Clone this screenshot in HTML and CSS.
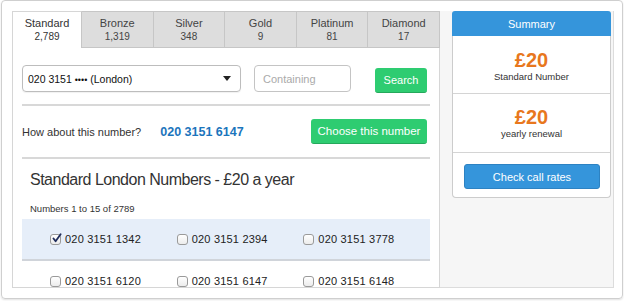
FILE: index.html
```html
<!DOCTYPE html>
<html>
<head>
<meta charset="utf-8">
<link rel="stylesheet" href="styles.css">
</head>
<body>
<div class="frame">
  <div class="main">
    <div class="tabs">
      <div class="tab active"><span class="tab-name">Standard</span><span class="tab-count">2,789</span></div>
      <div class="tab"><span class="tab-name">Bronze</span><span class="tab-count">1,319</span></div>
      <div class="tab"><span class="tab-name">Silver</span><span class="tab-count">348</span></div>
      <div class="tab"><span class="tab-name">Gold</span><span class="tab-count">9</span></div>
      <div class="tab"><span class="tab-name">Platinum</span><span class="tab-count">81</span></div>
      <div class="tab"><span class="tab-name">Diamond</span><span class="tab-count">17</span></div>
    </div>
    <div class="panel">
      <div class="search-row">
        <div class="select"><span>020 3151 <span class="dots">••••</span> (London)</span><svg class="caret" width="8" height="5" viewBox="0 0 8 5"><path d="M0 0H8L4 5Z" fill="#222"/></svg></div>
        <div class="input">Containing</div>
        <div class="btn btn-green btn-search">Search</div>
      </div>
      <div class="rule"></div>
      <div class="suggest-row">
        <span class="suggest-label">How about this number?</span>
        <span class="suggest-number">020 3151 6147</span>
        <div class="btn btn-green btn-choose">Choose this number</div>
      </div>
      <div class="rule"></div>
      <h2 class="heading">Standard London Numbers - £20 a year</h2>
      <div class="count">Numbers 1 to 15 of 2789</div>
      <div class="num-row selected">
        <div class="num"><span class="cb checked"><svg width="11" height="11" viewBox="0 0 11 11"><path d="M2.5 5.5L4.6 8.3L9.6 1.2" fill="none" stroke="#1f2d5c" stroke-width="1.8" stroke-linecap="round" stroke-linejoin="round"/></svg></span>020 3151 1342</div>
        <div class="num"><span class="cb"></span>020 3151 2394</div>
        <div class="num"><span class="cb"></span>020 3151 3778</div>
      </div>
      <div class="num-row">
        <div class="num"><span class="cb"></span>020 3151 6120</div>
        <div class="num"><span class="cb"></span>020 3151 6147</div>
        <div class="num"><span class="cb"></span>020 3151 6148</div>
      </div>
    </div>
  </div>
  <div class="side">
    <div class="card">
      <div class="card-head">Summary</div>
      <div class="card-body">
        <div class="price-block first">
          <div class="price">£20</div>
          <div class="price-label">Standard Number</div>
        </div>
        <div class="price-block">
          <div class="price">£20</div>
          <div class="price-label">yearly renewal</div>
        </div>
        <div class="rates">
          <div class="btn btn-blue">Check call rates</div>
        </div>
      </div>
    </div>
  </div>
</div>
</body>
</html>
```

FILE: styles.css
```css
* { box-sizing: border-box; }
html, body { margin: 0; padding: 0; background: #fff; }
body {
  font-family: "Liberation Sans", Arial, sans-serif;
  color: #333;
  width: 624px;
  height: 301px;
  overflow: hidden;
}
.frame {
  margin: 0 1px 0 1px;
  height: 299px;
  border: 1px solid #cfcfcf;
  border-radius: 4px;
  box-shadow: 0 1px 2px rgba(0,0,0,0.12);
  padding: 10px 8px 10px 10px;
  display: flex;
  align-items: flex-start;
}
.main {
  width: 428px;
  display: flex;
  flex-direction: column;
}
.tabs {
  display: flex;
  height: 37px;
}
.tab {
  flex: 1;
  display: flex;
  flex-direction: column;
  align-items: center;
  padding-top: 5px;
  background: #dddddd;
  border-top: 1px solid #c6c6c6;
  border-right: 1px solid #c6c6c6;
  border-bottom: 1px solid #c6c6c6;
  color: #444;
}
.tab.active {
  background: #fff;
  border-left: 1px solid #d6d6d6;
  border-top-color: #d6d6d6;
  border-bottom: none;
  flex: 0 0 70px;
  color: #333;
}
.tab-name { font-size: 11px; line-height: 13px; }
.tab-count { font-size: 10px; line-height: 13px; }
.panel {
  height: 240px;
  border-left: 1px solid #d6d6d6;
  border-right: 1px solid #d6d6d6;
  border-bottom: 1px solid #d6d6d6;
  padding: 17px 9px 0 9px;
  overflow: hidden;
}
.search-row {
  display: flex;
  align-items: flex-start;
  height: 28px;
}
.select {
  width: 219px;
  height: 27px;
  border: 1px solid #bdbdbd;
  border-radius: 4px;
  display: flex;
  align-items: center;
  justify-content: space-between;
  padding: 0 9px 0 5px;
  font-size: 10.5px;
  color: #111;
  box-shadow: 0 1px 1px rgba(0,0,0,0.06);
}
.dots { font-size: 9px; letter-spacing: 0; }
.caret { display: block; }
.input {
  margin-left: 13px;
  width: 97px;
  height: 27px;
  border: 1px solid #c4c4c4;
  border-radius: 4px;
  font-size: 11px;
  color: #aaa;
  display: flex;
  align-items: center;
  padding-left: 8px;
}
.btn {
  display: flex;
  align-items: center;
  justify-content: center;
  color: #fff;
  font-size: 11px;
  border-radius: 3px;
  height: 25px;
}
.btn-green {
  background: #2ecc71;
  border-bottom: 1px solid #25a85b;
}
.btn-search {
  margin-left: auto;
  margin-right: 3px;
  margin-top: 3px;
  width: 52px;
}
.rule {
  height: 2px;
  background: #d8d8d8;
}
.search-row + .rule { margin-top: 11px; }
.suggest-row {
  display: flex;
  align-items: center;
  padding: 13px 3px 13px 0;
}
.suggest-label { font-size: 11px; color: #333; }
.suggest-number {
  margin-left: 19px;
  font-size: 12.5px;
  font-weight: bold;
  color: #1b75bc;
}
.btn-choose {
  margin-left: auto;
  width: 116px;
  font-size: 11.5px;
}
.heading {
  margin: 11px 0 0 8px;
  font-size: 16px;
  letter-spacing: -0.5px;
  line-height: 20px;
  font-weight: normal;
  color: #333;
}
.count {
  margin: 13px 0 0 8px;
  font-size: 9.5px;
  line-height: 12px;
  color: #333;
}
.num-row {
  display: flex;
  height: 42px;
  padding-left: 28px;
  align-items: center;
  border-bottom: 2px solid #d0d4da;
}
.num-row.selected {
  margin-top: 4px;
  background: #e6eef9;
}
.num {
  width: 128px;
  display: flex;
  align-items: center;
  font-size: 11px;
  letter-spacing: 0.2px;
  color: #222;
}
.cb {
  width: 11px;
  height: 11px;
  border: 1px solid #9a9a9a;
  border-radius: 3px;
  background: linear-gradient(#fff, #ececec);
  margin-right: 4px;
  position: relative;
}
.cb.checked svg {
  position: absolute;
  left: 0;
  top: -2px;
}
.side {
  width: 174px;
  height: 277px;
  background: #f6f6f6;
  border-right: 1px solid #dcdcdc;
  border-bottom: 1px solid #dcdcdc;
  padding-left: 12px;
}
.card { width: 159px; }
.card-head {
  height: 25px;
  background: #3595db;
  border-radius: 3px 3px 0 0;
  color: #fff;
  font-size: 11px;
  display: flex;
  align-items: center;
  justify-content: center;
}
.card-body {
  background: #fff;
  border: 1px solid #cccccc;
  border-top: none;
  border-radius: 0 0 4px 4px;
}
.price-block {
  height: 59px;
  border-bottom: 1px solid #d4d4d4;
  text-align: center;
  padding-top: 12px;
}
.price-block.first { height: 58px; padding-top: 13px; }
.price {
  font-size: 20px;
  line-height: 22px;
  font-weight: bold;
  color: #e8771d;
}
.price-label {
  font-size: 9.5px;
  line-height: 12px;
  color: #333;
}
.rates {
  padding: 11px 10px 8px 11px;
}
.btn-blue {
  background: #3595db;
  border: 1px solid #2d82c2;
  border-radius: 3px;
}
```
